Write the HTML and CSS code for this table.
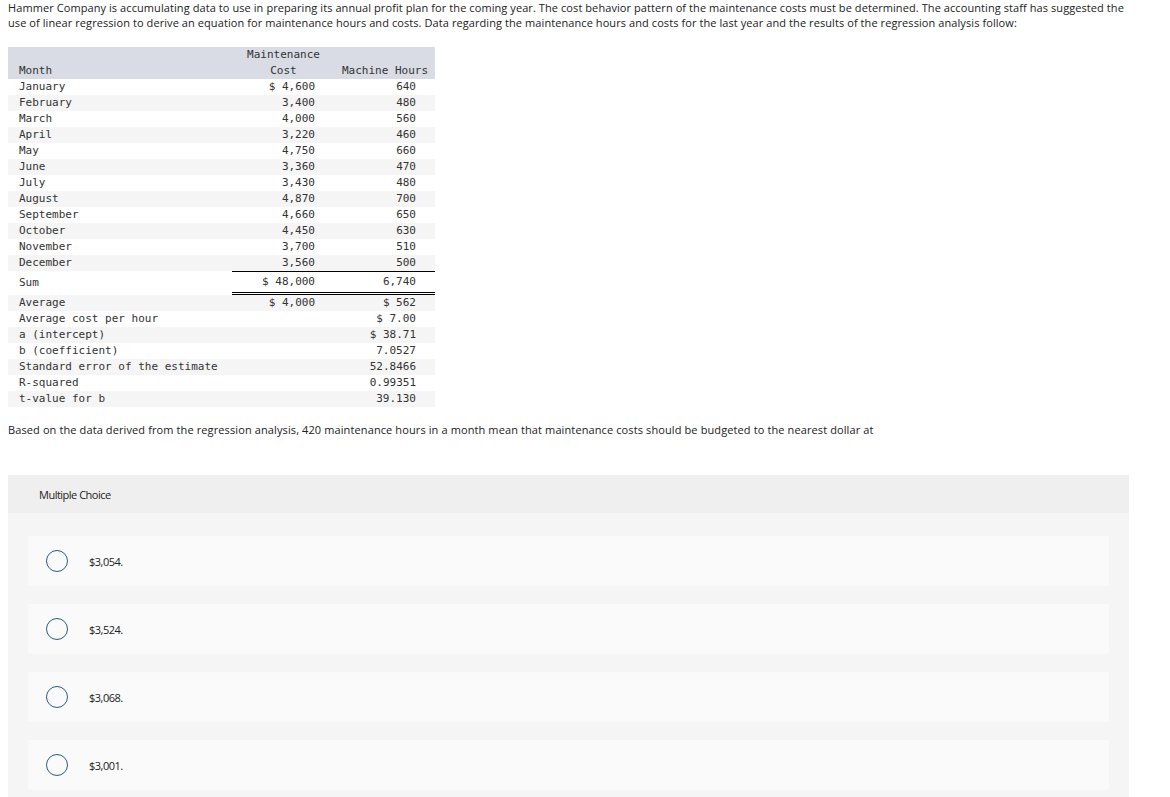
FILE: index.html
```html
<!DOCTYPE html>
<html>
<head>
<meta charset="utf-8">
<link rel="stylesheet" href="styles.css">
</head>
<body>
<div class="page">
  <p class="intro">Hammer Company is accumulating data to use in preparing its annual profit plan for the coming year. The cost behavior pattern of the maintenance costs must be determined. The accounting staff has suggested the use of linear regression to derive an equation for maintenance hours and costs. Data regarding the maintenance hours and costs for the last year and the results of the regression analysis follow:</p>

  <table class="data">
    <thead>
      <tr>
        <th class="c-label">Month</th>
        <th class="c-cost">Maintenance<br>Cost</th>
        <th class="c-hours">Machine Hours</th>
      </tr>
    </thead>
    <tbody>
      <tr><td class="c-label">January</td><td class="c-cost">$ 4,600</td><td class="c-hours">640</td></tr>
      <tr class="alt"><td class="c-label">February</td><td class="c-cost">3,400</td><td class="c-hours">480</td></tr>
      <tr><td class="c-label">March</td><td class="c-cost">4,000</td><td class="c-hours">560</td></tr>
      <tr class="alt"><td class="c-label">April</td><td class="c-cost">3,220</td><td class="c-hours">460</td></tr>
      <tr><td class="c-label">May</td><td class="c-cost">4,750</td><td class="c-hours">660</td></tr>
      <tr class="alt"><td class="c-label">June</td><td class="c-cost">3,360</td><td class="c-hours">470</td></tr>
      <tr><td class="c-label">July</td><td class="c-cost">3,430</td><td class="c-hours">480</td></tr>
      <tr class="alt"><td class="c-label">August</td><td class="c-cost">4,870</td><td class="c-hours">700</td></tr>
      <tr><td class="c-label">September</td><td class="c-cost">4,660</td><td class="c-hours">650</td></tr>
      <tr class="alt"><td class="c-label">October</td><td class="c-cost">4,450</td><td class="c-hours">630</td></tr>
      <tr><td class="c-label">November</td><td class="c-cost">3,700</td><td class="c-hours">510</td></tr>
      <tr class="alt"><td class="c-label">December</td><td class="c-cost">3,560</td><td class="c-hours">500</td></tr>
      <tr class="sum"><td class="c-label">Sum</td><td class="c-cost">$ 48,000</td><td class="c-hours">6,740</td></tr>
      <tr class="alt"><td class="c-label">Average</td><td class="c-cost">$ 4,000</td><td class="c-hours">$ 562</td></tr>
      <tr><td class="c-label">Average cost per hour</td><td class="c-cost"></td><td class="c-hours">$ 7.00</td></tr>
      <tr class="alt"><td class="c-label">a (intercept)</td><td class="c-cost"></td><td class="c-hours">$ 38.71</td></tr>
      <tr><td class="c-label">b (coefficient)</td><td class="c-cost"></td><td class="c-hours">7.0527</td></tr>
      <tr class="alt"><td class="c-label">Standard error of the estimate</td><td class="c-cost"></td><td class="c-hours">52.8466</td></tr>
      <tr><td class="c-label">R-squared</td><td class="c-cost"></td><td class="c-hours">0.99351</td></tr>
      <tr class="alt"><td class="c-label">t-value for b</td><td class="c-cost"></td><td class="c-hours">39.130</td></tr>
    </tbody>
  </table>

  <p class="question">Based on the data derived from the regression analysis, 420 maintenance hours in a month mean that maintenance costs should be budgeted to the nearest dollar at</p>

  <section class="mc">
    <div class="mc-head">Multiple Choice</div>
    <div class="mc-body">
      <div class="option"><span class="radio"></span><span class="opt-text">$3,054.</span></div>
      <div class="option"><span class="radio"></span><span class="opt-text">$3,524.</span></div>
      <div class="option"><span class="radio"></span><span class="opt-text">$3,068.</span></div>
      <div class="option"><span class="radio"></span><span class="opt-text">$3,001.</span></div>
    </div>
  </section>
</div>
</body>
</html>
```

FILE: styles.css
```css
html, body {
  margin: 0;
  padding: 0;
  background: #ffffff;
}

body {
  font-family: "Open Sans", Lato, "Liberation Sans", sans-serif;
  color: #222;
  overflow: hidden;
}

.page {
  width: 1121px;
  margin-left: 8px;
}

.intro {
  margin: 0;
  font-size: 11px;
  line-height: 15px;
  letter-spacing: 0.08px;
  color: #222;
}

.data {
  margin-top: 17px;
  border-collapse: separate;
  border-spacing: 0;
  width: 427px;
  font-family: "DejaVu Sans Mono", "Liberation Mono", monospace;
  font-size: 11px;
  color: #333;
}

.data th,
.data td {
  padding: 0;
  line-height: 16px;
  font-weight: normal;
  white-space: nowrap;
}

.data thead tr {
  background: #d9dce5;
}

.data th {
  vertical-align: bottom;
}

.data .c-label {
  width: 213px;
  padding-left: 11px;
  text-align: left;
}

.data .c-cost {
  width: 83px;
  padding-right: 20px;
  text-align: right;
}

.data .c-hours {
  width: 81px;
  padding-right: 19px;
  text-align: right;
}

.data th.c-cost,
.data th.c-hours {
  text-align: center;
  padding-right: 0;
}

.data th.c-cost {
  width: 103px;
}

.data th.c-hours {
  width: 100px;
}

.data tr.alt {
  background: #f5f5f5;
}

.data tr.sum td {
  line-height: 20px;
}

.data tr.sum td.c-cost,
.data tr.sum td.c-hours {
  border-top: 1px solid #000;
  border-bottom: 3px double #000;
}

.question {
  margin: 15px 0 0 0;
  font-size: 11px;
  line-height: 15px;
  letter-spacing: 0.11px;
  color: #222;
}

.mc {
  margin-top: 38px;
  background: #f5f5f5;
}

.mc-head {
  height: 38px;
  background: #efefef;
  padding-left: 31px;
  display: flex;
  align-items: center;
  font-size: 11px;
  color: #222;
  letter-spacing: -0.5px;
}

.mc-body {
  padding: 23px 20px 10px 20px;
  display: flex;
  flex-direction: column;
  gap: 18px;
}

.option {
  height: 50px;
  background: #fafafa;
  border-radius: 3px;
  display: flex;
  align-items: center;
  padding-left: 18px;
}

.radio {
  width: 20px;
  height: 20px;
  border: 1.5px solid #2b5b8c;
  border-radius: 50%;
  box-sizing: content-box;
  flex: none;
}

.opt-text {
  margin-left: 21px;
  font-size: 11px;
  color: #222;
  letter-spacing: -0.5px;
}
```
